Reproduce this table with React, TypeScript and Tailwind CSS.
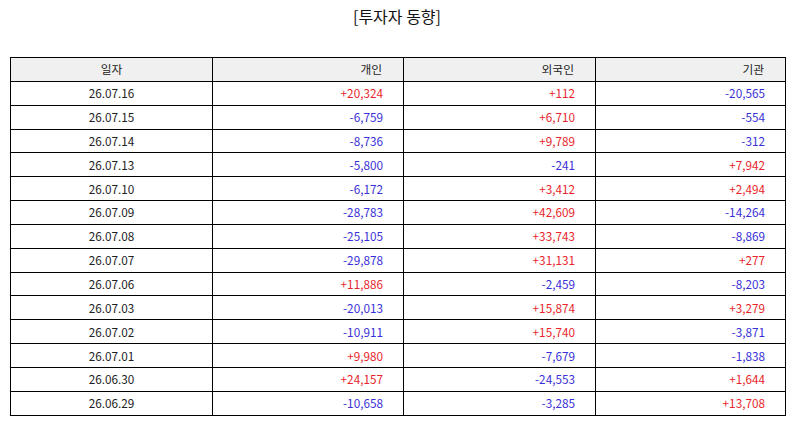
import React from 'react'

const rows: [string, string, string, string][] = [
  ['26.07.16', '+20,324', '+112', '-20,565'],
  ['26.07.15', '-6,759', '+6,710', '-554'],
  ['26.07.14', '-8,736', '+9,789', '-312'],
  ['26.07.13', '-5,800', '-241', '+7,942'],
  ['26.07.10', '-6,172', '+3,412', '+2,494'],
  ['26.07.09', '-28,783', '+42,609', '-14,264'],
  ['26.07.08', '-25,105', '+33,743', '-8,869'],
  ['26.07.07', '-29,878', '+31,131', '+277'],
  ['26.07.06', '+11,886', '-2,459', '-8,203'],
  ['26.07.03', '-20,013', '+15,874', '+3,279'],
  ['26.07.02', '-10,911', '+15,740', '-3,871'],
  ['26.07.01', '+9,980', '-7,679', '-1,838'],
  ['26.06.30', '+24,157', '-24,553', '+1,644'],
  ['26.06.29', '-10,658', '-3,285', '+13,708'],
]

// red for net buying, blue for net selling
const tone = (v: string) => (v.startsWith('+') ? 'text-[#e8262b]' : 'text-[#3a30d8]')

export default function App() {
  return (
    <div
      className="w-[794px] h-[425px] bg-white"
      style={{ fontFamily: '"Noto Sans CJK KR", "Noto Sans", sans-serif' }}
    >
      <h1 className="pt-[4px] h-[57px] text-center text-[16px] leading-[24px] text-[#111]">
        [투자자 동향]
      </h1>
      <table className="ml-[10px] w-[775px] border-collapse table-fixed text-[11.75px] leading-[14px] text-[#222]">
        <colgroup>
          <col className="w-[202px]" />
          <col className="w-[191px]" />
          <col className="w-[192px]" />
          <col className="w-[190px]" />
        </colgroup>
        <thead>
          <tr className="h-[23.85px] bg-[#f0f0f0]">
            <th className="p-0 border border-black font-normal text-center">일자</th>
            <th className="p-0 border border-black font-normal text-right pr-[21px]">개인</th>
            <th className="p-0 border border-black font-normal text-right pr-[21px]">외국인</th>
            <th className="p-0 border border-black font-normal text-right pr-[21px]">기관</th>
          </tr>
        </thead>
        <tbody>
          {rows.map(([date, indiv, foreign, inst]) => (
            <tr key={date} className="h-[23.85px]">
              <td className="p-0 border border-black text-center">{date}</td>
              <td className={`p-0 border border-black text-right pr-[20px] ${tone(indiv)}`}>{indiv}</td>
              <td className={`p-0 border border-black text-right pr-[20px] ${tone(foreign)}`}>{foreign}</td>
              <td className={`p-0 border border-black text-right pr-[20px] ${tone(inst)}`}>{inst}</td>
            </tr>
          ))}
        </tbody>
      </table>
    </div>
  )
}
